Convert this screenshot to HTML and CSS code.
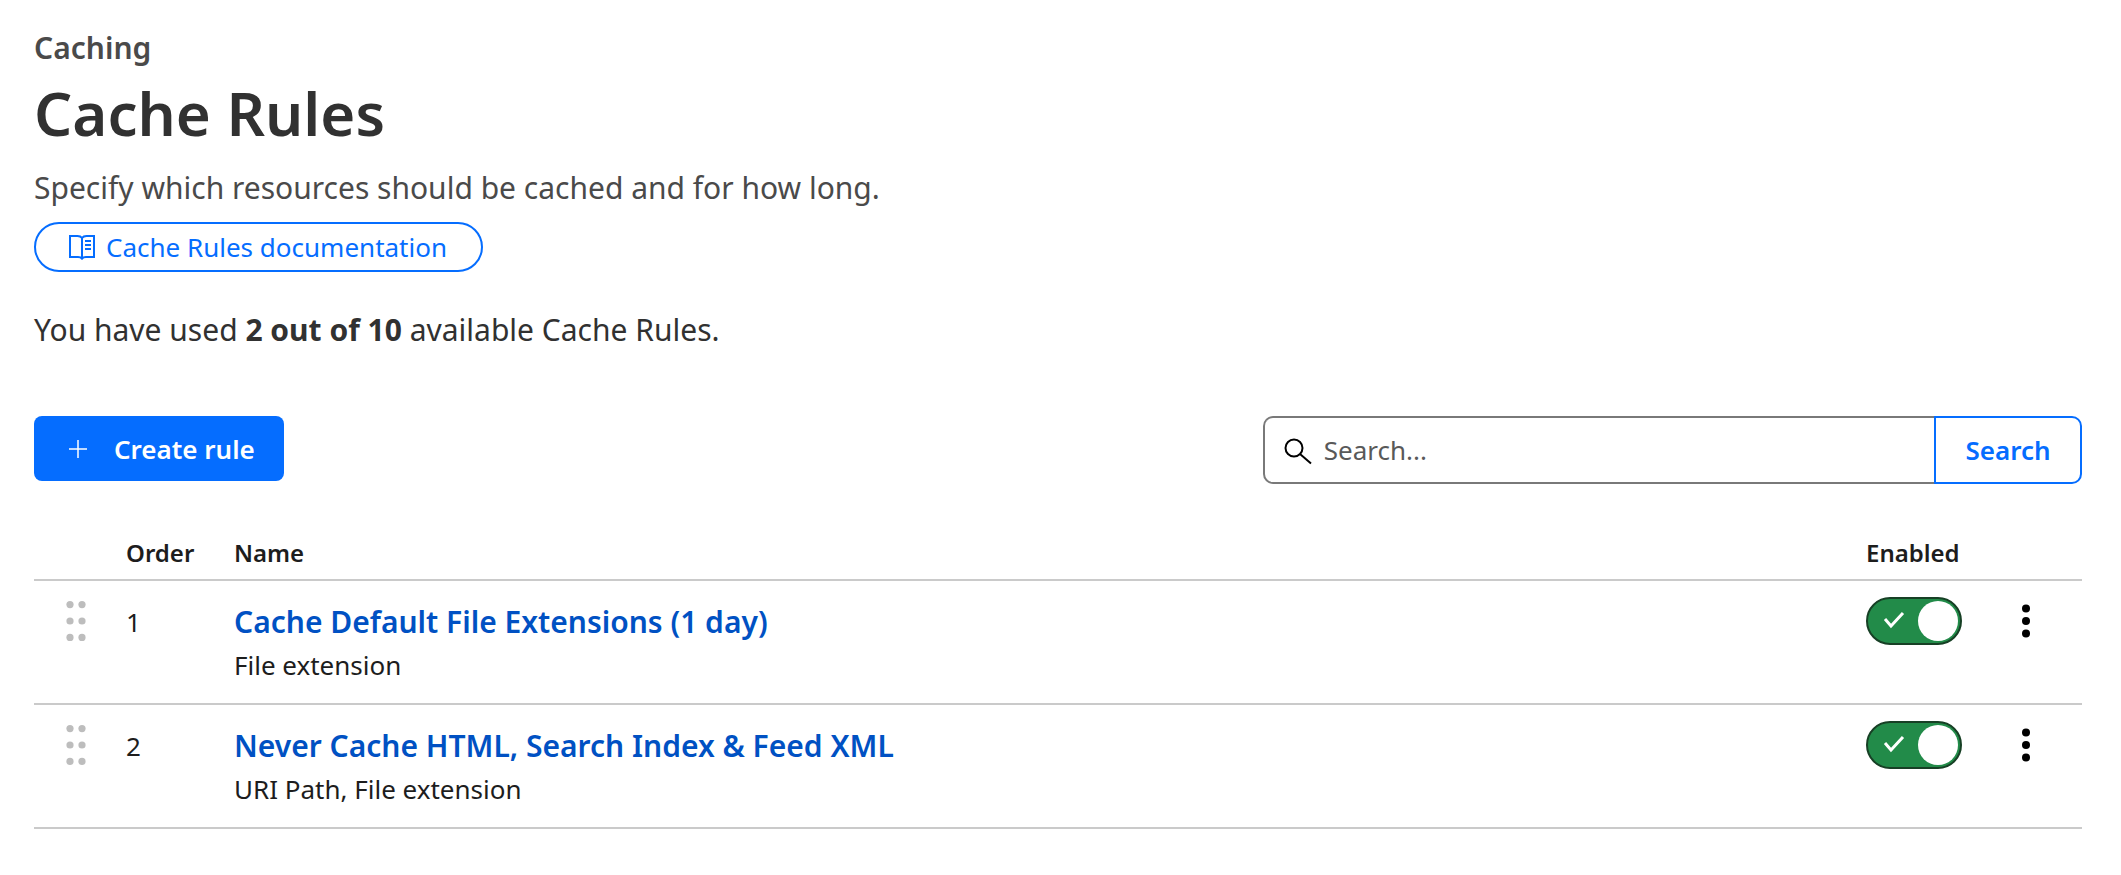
FILE: index.html
```html
<!DOCTYPE html>
<html lang="en">
<head>
<meta charset="utf-8">
<title>Cache Rules</title>
<link rel="stylesheet" href="styles.css">
</head>
<body>
<main class="page">
  <header>
    <p class="eyebrow">Caching</p>
    <h1 class="title">Cache Rules</h1>
    <p class="lead">Specify which resources should be cached and for how long.</p>
    <a class="doc-link" href="#docs">
      <svg width="28" height="26" viewBox="0 0 28 26" fill="none" stroke="currentColor" stroke-width="2" aria-hidden="true">
        <path d="M14 4C13 2.600 11.500 2 9.500 2H2V23H10C12 23 13.300 23.600 14 24.600C14.700 23.600 16 23 18 23H26V2H18.500C16.500 2 15 2.600 14 4V24"/>
        <path d="M17 7H23M17 11H23M17 15H23"/>
      </svg>
      <span>Cache Rules documentation</span>
    </a>
  </header>
  <p class="usage">You have used <strong>2 out of 10</strong> available Cache Rules.</p>
  <div class="toolbar">
    <button class="create" type="button">
      <svg width="18" height="18" viewBox="0 0 18 18" fill="none" stroke="currentColor" stroke-width="1.500" aria-hidden="true"><path d="M9 0V18M0 9H18"/></svg>
      <span>Create rule</span>
    </button>
    <form class="search" role="search">
      <label class="field">
        <svg width="28" height="32" viewBox="0 0 28 32" fill="none" stroke="#000" stroke-width="2" aria-hidden="true"><circle cx="10" cy="14" r="8.500"/><path d="M16 20L27 29.500"/></svg>
        <input class="field-input" type="text" placeholder="Search..." aria-label="Search">
      </label>
      <button class="search-button" type="button">Search</button>
    </form>
  </div>
  <table class="rules">
    <colgroup><col class="col-drag"><col class="col-order"><col><col class="col-enabled"><col class="col-menu"></colgroup>
    <thead>
      <tr><th></th><th>Order</th><th>Name</th><th>Enabled</th><th></th></tr>
    </thead>
    <tbody>
      <tr>
        <td><button class="drag" type="button" aria-label="Move rule 1"><svg width="20" height="40" viewBox="0 0 20 40" fill="#bdbdbd"><circle cx="4" cy="3.600" r="3.600"/><circle cx="16" cy="3.600" r="3.600"/><circle cx="4" cy="20" r="3.600"/><circle cx="16" cy="20" r="3.600"/><circle cx="4" cy="36.400" r="3.600"/><circle cx="16" cy="36.400" r="3.600"/></svg></button></td>
        <td class="order">1</td>
        <td><a class="rule-name" href="#rule-1">Cache Default File Extensions (1 day)</a><p class="rule-fields">File extension</p></td>
        <td><label class="toggle"><input class="toggle-input" type="checkbox" checked aria-label="Enable rule 1"><svg class="toggle-check" width="22" height="18" viewBox="0 0 22 18" fill="none" stroke="#fff" stroke-width="3"><path d="M2 8L8 15L20 2"/></svg></label></td>
        <td><button class="menu" type="button" aria-label="Rule 1 actions"><svg width="8" height="34" viewBox="0 0 8 34"><circle cx="4" cy="4.500" r="4"/><circle cx="4" cy="17" r="4"/><circle cx="4" cy="29.500" r="4"/></svg></button></td>
      </tr>
      <tr>
        <td><button class="drag" type="button" aria-label="Move rule 2"><svg width="20" height="40" viewBox="0 0 20 40" fill="#bdbdbd"><circle cx="4" cy="3.600" r="3.600"/><circle cx="16" cy="3.600" r="3.600"/><circle cx="4" cy="20" r="3.600"/><circle cx="16" cy="20" r="3.600"/><circle cx="4" cy="36.400" r="3.600"/><circle cx="16" cy="36.400" r="3.600"/></svg></button></td>
        <td class="order">2</td>
        <td><a class="rule-name" href="#rule-2">Never Cache HTML, Search Index &amp; Feed XML</a><p class="rule-fields">URI Path, File extension</p></td>
        <td><label class="toggle"><input class="toggle-input" type="checkbox" checked aria-label="Enable rule 2"><svg class="toggle-check" width="22" height="18" viewBox="0 0 22 18" fill="none" stroke="#fff" stroke-width="3"><path d="M2 8L8 15L20 2"/></svg></label></td>
        <td><button class="menu" type="button" aria-label="Rule 2 actions"><svg width="8" height="34" viewBox="0 0 8 34"><circle cx="4" cy="4.500" r="4"/><circle cx="4" cy="17" r="4"/><circle cx="4" cy="29.500" r="4"/></svg></button></td>
      </tr>
    </tbody>
  </table>
</main>
</body>
</html>
```
FILE: styles.css
```css
* { box-sizing: border-box; }
body { margin: 0; background: #fff; color: #1d1d1d; font-family: "Segoe UI", "Noto Sans", sans-serif; font-size: 30px; line-height: 44px; }
h1, p { margin: 0; }
svg { display: block; flex: none; }
button, input { font: inherit; color: inherit; }
button { cursor: pointer; }

.page { padding: 26px 39px 40px 34px; }
.eyebrow { color: #4a4a4a; font-weight: 600; }
.title { color: #313131; font-size: 60px; font-weight: 600; line-height: 86px; }
.lead { margin-top: 10px; color: #4a4a4a; }
.doc-link { display: inline-flex; align-items: center; gap: 10px; height: 50px; margin-top: 12px; padding: 0 34px 0 32px; border: 2px solid #056dff; border-radius: 25px; color: #056dff; font-size: 26px; text-decoration: none; vertical-align: top; }
.usage { margin-top: 36px; color: #313131; }

.toolbar { display: flex; justify-content: space-between; align-items: flex-start; margin-top: 64px; }
.create { display: flex; align-items: center; gap: 27px; height: 65px; padding: 0 29px 0 35px; border: 0; border-radius: 8px; background: #056dff; color: #fff; font-size: 26px; font-weight: 600; }
.search { display: flex; width: 40%; height: 68px; }
.field { display: flex; flex: 1; align-items: center; gap: 12px; min-width: 0; padding-left: 19px; border: 2px solid #797979; border-right: 0; border-radius: 10px 0 0 10px; font-size: 26px; }
.field-input { flex: 1; min-width: 0; padding: 0; border: 0; outline: 0; background: none; }
.field-input::placeholder { color: #595959; opacity: 1; }
.search-button { width: 148px; padding: 0; border: 2px solid #056dff; border-radius: 0 10px 10px 0; background: #fff; color: #056dff; font-size: 26px; font-weight: 600; }

.rules { width: 100%; margin-top: 39px; border-collapse: separate; border-spacing: 0; table-layout: fixed; }
.col-drag { width: 92px; }
.col-order { width: 108px; }
.col-enabled { width: 120px; }
.col-menu { width: 96px; }
.rules th { padding: 12px 0 8px; border-bottom: 2px solid #cacaca; font-size: 24px; font-weight: 600; line-height: 36px; text-align: left; }
.rules td { padding: 18px 0; border-bottom: 2px solid #cacaca; vertical-align: top; }
.rules .order { font-size: 26px; line-height: 46px; }
.rule-name { display: block; color: #0051c3; font-weight: 600; line-height: 46px; text-decoration: none; }
.rule-fields { font-size: 26px; line-height: 40px; }
.drag, .menu { display: flex; align-items: center; height: 44px; padding: 0; border: 0; background: none; }
.drag { margin-left: 32px; }
.menu { justify-content: center; width: 16px; margin-left: 32px; }
.toggle { display: block; position: relative; width: 96px; height: 44px; }
.toggle-input { display: flex; align-items: center; width: 96px; height: 48px; margin: -2px 0; padding: 2px; border: 2px solid #174025; border-radius: 24px; background: #228b49; appearance: none; }
.toggle-input::before { width: 40px; height: 40px; border-radius: 50%; background: #fff; content: ""; }
.toggle-input:checked { justify-content: flex-end; }
.toggle-check { position: absolute; top: 14px; left: 17px; pointer-events: none; }
```
